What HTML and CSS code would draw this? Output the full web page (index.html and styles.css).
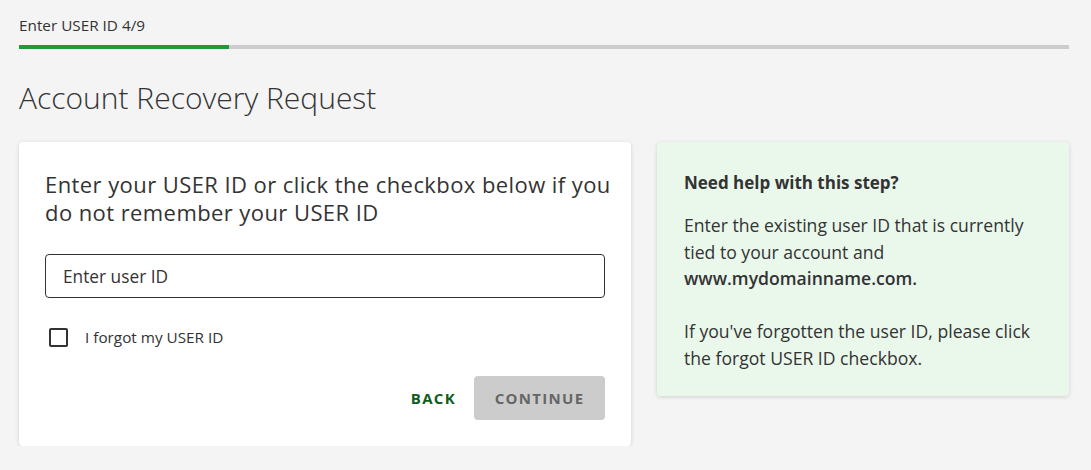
FILE: index.html
```html
<!DOCTYPE html>
<html lang="en">
<head>
<meta charset="utf-8">
<title>Account Recovery Request</title>
<link rel="stylesheet" href="styles.css">
</head>
<body>
<div class="page">
  <div class="step-label">Enter USER ID 4/9</div>
  <div class="progress"><div class="progress-fill" style="width: 20%"></div></div>
  <h1 class="title">Account Recovery Request</h1>
  <div class="columns">
    <section class="card">
      <h2 class="card-heading">Enter your USER ID or click the checkbox below if you do not remember your USER ID</h2>
      <input class="text-input" type="text" placeholder="Enter user ID">
      <label class="check-row">
        <span class="checkbox"></span>
        <span class="check-label">I forgot my USER ID</span>
      </label>
      <div class="actions">
        <button class="btn-back" type="button">BACK</button>
        <button class="btn-continue" type="button" disabled>CONTINUE</button>
      </div>
    </section>
    <aside class="help">
      <h3 class="help-heading">Need help with this step?</h3>
      <p class="help-text">Enter the existing user ID that is currently tied to your account and <strong>www.mydomainname.com.</strong></p>
      <p class="help-text">If you've forgotten the user ID, please click the forgot USER ID checkbox.</p>
    </aside>
  </div>
</div>
</body>
</html>
```

FILE: styles.css
```css
* { box-sizing: border-box; }
html, body { margin: 0; padding: 0; }
body {
  background: #f4f4f4;
  font-family: "Open Sans", "Noto Sans", sans-serif;
  color: #333;
}
.page {
  padding: 15px 22px 0 19px;
}
.step-label {
  font-size: 15.3px;
  line-height: 20px;
  color: #333;
}
.progress {
  margin-top: 10px;
  height: 4px;
  background: #cccccc;
}
.progress-fill {
  height: 100%;
  background: #1f9a36;
}
.title {
  margin: 29px 0 0 0;
  font-size: 30px;
  line-height: 40px;
  font-weight: 300;
  color: #333;
}
.columns {
  display: flex;
  align-items: flex-start;
  gap: 26px;
  margin-top: 24px;
}
.card {
  width: 612px;
  background: #fff;
  border-radius: 4px;
  box-shadow: 0 1px 4px rgba(0,0,0,0.15);
  padding: 28px 26px 26px 26px;
}
.card-heading {
  margin: 0 -14px 0 0;
  font-size: 22px;
  line-height: 28px;
  font-weight: 500;
  letter-spacing: 0.42px;
  color: #333;
}
.text-input {
  display: block;
  width: 100%;
  height: 44px;
  margin-top: 28px;
  border: 1px solid #333;
  border-radius: 4px;
  padding: 0 17px;
  font-family: inherit;
  font-size: 17.3px;
  color: #333;
  background: #fff;
}
.text-input::placeholder { color: #333; }
.check-row {
  display: flex;
  align-items: center;
  margin-top: 29px;
  padding-left: 4px;
}
.checkbox {
  width: 19px;
  height: 19px;
  border: 2px solid #333;
  border-radius: 2px;
}
.check-label {
  margin-left: 17px;
  font-size: 15.3px;
  line-height: 20px;
  color: #333;
}
.actions {
  display: flex;
  justify-content: flex-end;
  align-items: center;
  gap: 18px;
  margin-top: 29px;
}
.btn-back {
  border: 0;
  background: transparent;
  padding: 0;
  font-family: inherit;
  font-size: 15px;
  font-weight: 700;
  letter-spacing: 1.3px;
  color: #0e5e1d;
}
.btn-continue {
  width: 131px;
  height: 44px;
  border: 0;
  border-radius: 4px;
  background: #cccccc;
  font-family: inherit;
  font-size: 15px;
  font-weight: 700;
  letter-spacing: 1.3px;
  color: #666;
}
.help {
  flex: 1;
  background: #eaf8ec;
  border-radius: 4px;
  box-shadow: 0 1px 4px rgba(0,0,0,0.15);
  padding: 30px 27px 25px 27px;
}
.help-heading {
  margin: 0;
  font-size: 17px;
  line-height: 22px;
  font-weight: 700;
  color: #333;
}
.help-text {
  margin: 18px 0 0 0;
  font-size: 17.6px;
  line-height: 26.5px;
  color: #333;
}
.help-text + .help-text { margin-top: 26.5px; }
.help-text strong { font-weight: 600; }
```
